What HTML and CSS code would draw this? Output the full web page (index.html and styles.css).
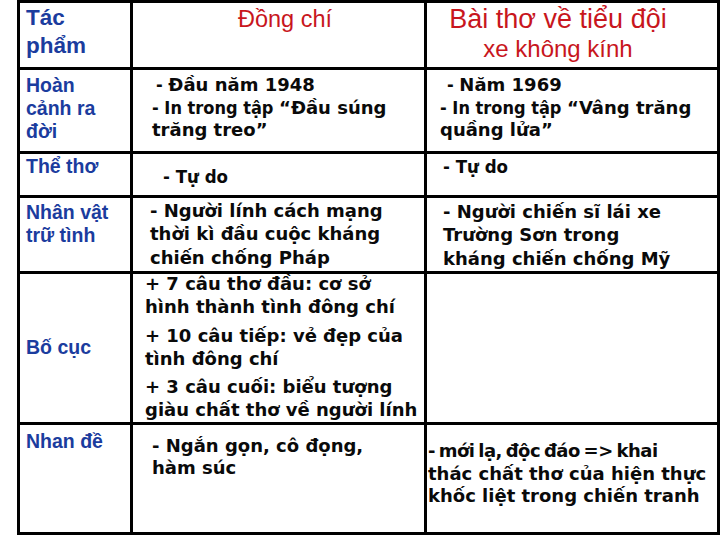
FILE: index.html
```html
<!DOCTYPE html>
<html lang="vi">
<head>
<meta charset="utf-8">
<title>So sánh Đồng chí và Bài thơ về tiểu đội xe không kính</title>
<link rel="stylesheet" href="styles.css">
</head>
<body>
<div class="sheet">
  <!-- Row 1 -->
  <div class="cell label head-label r1">Tác<br>phẩm</div>
  <div class="cell title t-dongchi">Đồng chí</div>
  <div class="cell title t-baitho"><div class="big">Bài thơ về tiểu đội</div><div class="small">xe không kính</div></div>

  <!-- Row 2 -->
  <div class="cell label r2">Hoàn<br>cảnh ra<br>đời</div>
  <div class="cell body r2c2">
    <div class="ind-a"><span class="cond">- </span>Đầu năm 1948</div>
    <div class="ind-b"><span class="cond">- In trong tập </span>“Đầu súng<br>trăng treo”</div>
  </div>
  <div class="cell body r2c3">
    <div class="ind-c"><span class="cond">- </span>Năm 1969</div>
    <div class="ind-d"><span class="cond">- In trong tập </span>“Vâng trăng<br>quầng lửa”</div>
  </div>

  <!-- Row 3 -->
  <div class="cell label r3">Thể thơ</div>
  <div class="cell body cond r3c2">- Tự do</div>
  <div class="cell body cond r3c3">- Tự do</div>

  <!-- Row 4 -->
  <div class="cell label r4">Nhân vật<br>trữ tình</div>
  <div class="cell body r4c2">- Người lính cách mạng<br>thời kì đầu cuộc kháng<br>chiến chống Pháp</div>
  <div class="cell body r4c3">- Người chiến sĩ lái xe<br>Trường Sơn trong<br>kháng chiến chống Mỹ</div>

  <!-- Row 5 -->
  <div class="cell label center r5">Bố cục</div>
  <div class="cell body r5c2">
    <p class="part first">+ 7 câu thơ đầu: cơ sở<br>hình thành tình đông chí</p>
    <p class="part">+ 10 câu tiếp: vẻ đẹp của<br>tình đông chí</p>
    <p class="part">+ 3 câu cuối: biểu tượng<br>giàu chất thơ về người lính</p>
  </div>
  <div class="cell"></div>

  <!-- Row 6 -->
  <div class="cell label r6">Nhan đề</div>
  <div class="cell body r6c2">- Ngắn gọn, cô đọng,<br>hàm súc</div>
  <div class="cell body r6c3"><span class="tight">- mới lạ, độc đáo =&gt; khai</span><br>thác chất thơ của hiện thực<br>khốc liệt trong chiến tranh</div>
</div>
</body>
</html>
```

FILE: styles.css
```css
html, body {
  margin: 0;
  padding: 0;
  background: #ffffff;
}

.sheet {
  margin-left: 17px;
  width: 703px;
  height: 535px;
  box-sizing: border-box;
  padding: 3px;
  background: #000000;
  display: grid;
  grid-template-columns: 110px 291px 290px;
  grid-template-rows: 64px 81px 41px 73px 148px 107px;
  gap: 3px;
}

.cell {
  background: #ffffff;
  overflow: hidden;
  box-sizing: border-box;
}

/* first column labels */
.label {
  color: #1b3c9e;
  font-family: "Liberation Sans", Arial, sans-serif;
  font-weight: bold;
  font-size: 19.5px;
  line-height: 23.3px;
  padding-left: 6px;
}
.head-label {
  font-size: 22.5px;
  line-height: 28px;
  padding-top: 1px;
}
.label.r2 { padding-top: 3.5px; }
.label.r3 { padding-top: 1px; }
.label.r4 { padding-top: 3px; }
.label.r6 { padding-top: 5px; }
.label.center {
  display: flex;
  align-items: center;
}

/* red titles */
.title {
  color: #c8161d;
  font-family: "Liberation Sans", Arial, sans-serif;
  font-weight: normal;
}
.t-dongchi {
  font-size: 23.5px;
  line-height: 28px;
  padding: 2px 0 0 105px;
}
.t-baitho {
  text-align: center;
  padding: 2px 28px 0 0;
}
.t-baitho .big {
  font-size: 27px;
  line-height: 28px;
}
.t-baitho .small {
  font-size: 24px;
  line-height: 28px;
  margin-top: 2px;
}

/* body text */
.body {
  color: #0a0a0a;
  font-family: "DejaVu Sans", Verdana, sans-serif;
  font-weight: bold;
  font-size: 18px;
  line-height: 23.3px;
}
.cond {
  font-family: "DejaVu Sans Condensed", "DejaVu Sans", sans-serif;
  font-stretch: condensed;
}

.r2c2 { padding-top: 4px; line-height: 22.5px; }
.r2c2 .ind-a { padding-left: 23px; }
.r2c2 .ind-b { padding-left: 19px; }
.r2c3 { padding-top: 4px; line-height: 22.5px; }
.r2c3 .ind-c { padding-left: 20px; }
.r2c3 .ind-d { padding-left: 13px; }

.r3c2 { padding: 11px 0 0 30px; font-size: 18.5px; }
.r3c3 { padding: 1px 0 0 16px; font-size: 18.5px; }

.r4c2 { padding: 1px 0 0 17px; }
.r4c3 { padding: 2px 0 0 16px; }

.r5c2 { padding-left: 12px; }
.part { margin: 5px 0 0 0; }
.part.first { margin-top: -2px; }

.r6c2 { padding: 10px 0 0 19px; line-height: 22px; }
.r6c3 { padding: 15px 0 0 1px; line-height: 22.5px; }
.tight { letter-spacing: -0.5px; word-spacing: -2px; }
```
